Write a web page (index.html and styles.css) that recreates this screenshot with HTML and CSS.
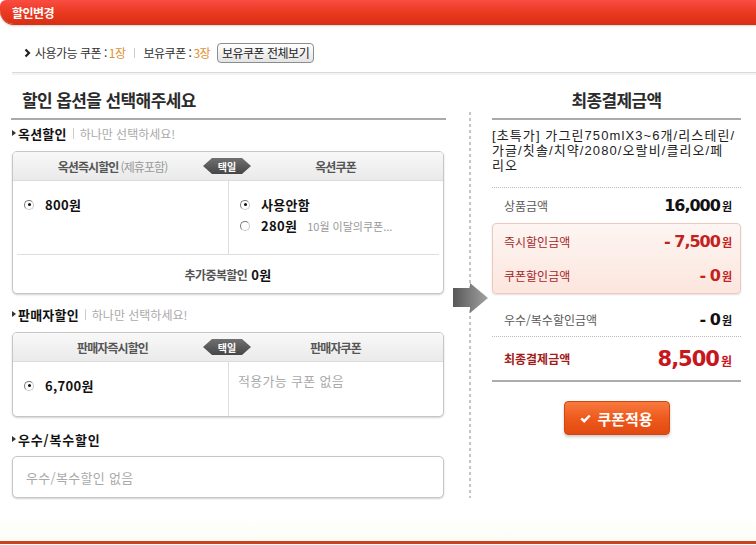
FILE: index.html
```html
<!DOCTYPE html>
<html lang="ko">
<head>
<meta charset="utf-8">
<title>할인변경</title>
<link rel="stylesheet" href="styles.css">
</head>
<body>
<div class="topbar">할인변경</div>

<div class="coupon-row">
  <svg class="chev" width="7" height="10" viewBox="0 0 7 10"><polyline points="1.5,1.5 5,5 1.5,8.5" fill="none" stroke="#222" stroke-width="2.2"/></svg>
  <span class="cr-label">사용가능 쿠폰 :</span><span class="cr-num">1장</span>
  <span class="cr-sep"></span>
  <span class="cr-label">보유쿠폰 :</span><span class="cr-num">3장</span>
  <button class="btn-all" type="button">보유쿠폰 전체보기</button>
</div>

<div class="main">
  <div class="left">
    <h2 class="page-title">할인 옵션을 선택해주세요</h2>

    <div class="sec-label"><span class="tri"></span><b>옥션할인</b><span class="bar"></span><span class="hint">하나만 선택하세요!</span></div>
    <div class="box">
      <div class="box-head">
        <div class="hcol"><b>옥션즉시할인</b><span class="sub">(제휴포함)</span></div>
        <div class="hcol"><b>옥션쿠폰</b></div>
        <span class="badge">택일</span>
      </div>
      <div class="box-body b1">
        <div class="bcol">
          <div class="opt"><span class="radio on"></span><b class="amt">800원</b></div>
        </div>
        <div class="bcol">
          <div class="opt"><span class="radio on"></span><b class="amt">사용안함</b></div>
          <div class="opt"><span class="radio"></span><b class="amt">280원</b><span class="desc">10월 이달의쿠폰...</span></div>
        </div>
      </div>
      <div class="box-foot"><span class="foot-label">추가중복할인</span> <b class="amt">0원</b></div>
    </div>

    <div class="sec-label"><span class="tri"></span><b>판매자할인</b><span class="bar"></span><span class="hint">하나만 선택하세요!</span></div>
    <div class="box">
      <div class="box-head">
        <div class="hcol"><b>판매자즉시할인</b></div>
        <div class="hcol"><b>판매자쿠폰</b></div>
        <span class="badge">택일</span>
      </div>
      <div class="box-body b2">
        <div class="bcol">
          <div class="opt"><span class="radio on"></span><b class="amt">6,700원</b></div>
        </div>
        <div class="bcol">
          <div class="empty">적용가능 쿠폰 없음</div>
        </div>
      </div>
    </div>

    <div class="sec-label third"><span class="tri"></span><b>우수/복수할인</b></div>
    <div class="box simple">우수/복수할인 없음</div>
  </div>

  <div class="divider"></div>

  <div class="right">
    <h2 class="page-title center">최종결제금액</h2>
    <div class="product">
      <div class="pline">[초특가] 가그린750mlX3~6개/리스테린/</div>
      <div class="pline">가글/칫솔/치약/2080/오랄비/클리오/페</div>
      <div class="pline">리오</div>
    </div>
    <div class="price-row"><span class="pl">상품금액</span><span class="pv"><span class="n">16,000</span><span class="won">원</span></span></div>
    <div class="pink">
      <div class="price-row red r1"><span class="pl">즉시할인금액</span><span class="pv"><span class="n">- 7,500</span><span class="won">원</span></span></div>
      <div class="price-row red r2"><span class="pl">쿠폰할인금액</span><span class="pv"><span class="n">- 0</span><span class="won">원</span></span></div>
    </div>
    <div class="price-row dotted"><span class="pl">우수/복수할인금액</span><span class="pv"><span class="n">- 0</span><span class="won">원</span></span></div>
    <div class="price-row final"><span class="pl">최종결제금액</span><span class="pv"><span class="n">8,500</span><span class="won">원</span></span></div>
    <div class="btn-wrap">
      <button class="btn-apply" type="button"><svg width="11" height="9" viewBox="0 0 11 9"><polyline points="1.3,4.3 4.2,7.2 9.8,1.5" fill="none" stroke="#fff" stroke-width="2.4"/></svg>쿠폰적용</button>
    </div>
  </div>

  <svg class="arrow" width="36" height="31" viewBox="0 0 36 31">
    <defs>
      <linearGradient id="ag" x1="0" x2="1" y1="0" y2="0">
        <stop offset="0" stop-color="#585858"/>
        <stop offset="1" stop-color="#a2a2a2"/>
      </linearGradient>
    </defs>
    <polygon points="0,5 17,5 17,0 35,15 17,30 17,24 0,24" fill="url(#ag)"/>
  </svg>
</div>

<div class="bottom-band"></div>
<div class="bottom-line"></div>
</body>
</html>
```
FILE: styles.css
```css
* { box-sizing: border-box; margin: 0; padding: 0; }
html, body { width: 756px; height: 545px; overflow: hidden; background: #fff; }
body {
  font-family: "Noto Sans CJK KR", "Liberation Sans", sans-serif;
  font-size: 12px;
  color: #333;
}
b { font-weight: bold; }

.topbar {
  height: 24px;
  padding-left: 12px;
  display: flex;
  align-items: center;
  color: #fff;
  font-weight: bold;
  font-size: 12px;
  letter-spacing: -0.5px;
  background: linear-gradient(#fa4c42, #e9391f 55%, #d92f15);
  border-radius: 6px 0 0 14px;
  box-shadow: 0 1px 0 #bd3a22, 0 2px 0 #f4d8cf, 0 3px 2px #efefef;
}

.coupon-row {
  margin-left: 12px;
  height: 49px;
  padding: 9px 0 0 12px;
  display: flex;
  align-items: center;
  border-bottom: 1px solid #dadada;
  box-shadow: 0 2px 0 #f3f3f3;
  letter-spacing: -0.5px;
  color: #333;
}
.chev { margin-right: 4px; }
.cr-num { color: #df8f2c; margin-left: 2px; }
.cr-sep { width: 1px; height: 10px; background: #ccc; margin: 0 9px 0 8px; }
.btn-all {
  margin-left: 7px;
  height: 20px;
  width: 97px;
  font: 12px "Noto Sans CJK KR", sans-serif;
  letter-spacing: -0.5px;
  color: #222;
  border: 1px solid #8c8c8c;
  border-radius: 4px;
  background: linear-gradient(#ffffff, #e4e4e4);
}

.main { position: relative; display: flex; align-items: flex-start; }
.left { margin-left: 11px; width: 435px; }
.page-title {
  font-size: 17px;
  font-weight: bold;
  letter-spacing: -0.6px;
  color: #2b2b2b;
  line-height: 24px;
  padding: 15px 0 6px 11px;
  border-bottom: 2px solid #aaa;
}
.page-title.center { text-align: center; padding-left: 0; }

.sec-label {
  display: flex;
  align-items: center;
  height: 16px;
  margin: 12px 0 10px 1px;
  font-size: 13px;
  color: #111;
  letter-spacing: 0.2px;
}
.page-title + .sec-label { margin-top: 5px; }
.sec-label.third { margin-top: 14px; margin-bottom: 9px; letter-spacing: 0.8px; }
.tri {
  width: 0; height: 0;
  border-left: 4px solid #333;
  border-top: 3.5px solid transparent;
  border-bottom: 3.5px solid transparent;
  margin-right: 2px;
}
.bar { width: 1px; height: 11px; background: #ccc; margin: 0 6px; }
.hint { color: #aaa; font-size: 12px; letter-spacing: 0; }

.box {
  margin-left: 1px;
  width: 432px;
  border: 1px solid #c6c6c6;
  border-radius: 5px;
  box-shadow: 0 1px 2px rgba(0,0,0,0.18);
  background: #fff;
  overflow: hidden;
}
.box-head {
  position: relative;
  display: grid;
  grid-template-columns: 1fr 1fr;
  height: 29px;
  border-bottom: 1px solid #dcdcdc;
  background: linear-gradient(#f8f8f8, #eaeaea);
}
.hcol {
  display: flex;
  align-items: center;
  justify-content: center;
  font-size: 12px;
  letter-spacing: -0.9px;
  color: #555;
}
.hcol:first-child { padding-right: 16px; }
.hcol .sub { font-weight: normal; color: #999; margin-left: 2px; }
.badge {
  position: absolute;
  left: 190px;
  top: 6px;
  width: 48px;
  height: 16px;
  display: flex;
  align-items: center;
  justify-content: center;
  font-size: 10px;
  font-weight: bold;
  color: #fff;
  background: linear-gradient(#707070, #464646);
  clip-path: polygon(0 50%, 9px 0, calc(100% - 9px) 0, 100% 50%, calc(100% - 9px) 100%, 9px 100%);
}

.box-body { display: grid; grid-template-columns: 1fr 1fr; }
.box-body.b1 { height: 73px; }
.box-body.b2 { height: 54px; }
.bcol { padding: 13px 0 0 11px; }
.bcol + .bcol { border-left: 1px solid #dedede; }
.opt { display: flex; align-items: center; height: 21px; }
.radio {
  width: 10px; height: 10px;
  border-radius: 50%;
  border: 1px solid #7a7a7a;
  border-right-color: #c8c8c8;
  border-bottom-color: #c8c8c8;
  background: #fff;
  margin-right: 11px;
  position: relative;
}
.radio.on::after {
  content: "";
  position: absolute;
  left: 2.5px; top: 2.5px;
  width: 3px; height: 3px;
  border-radius: 50%;
  background: #111;
}
.amt { font-size: 13px; color: #111; letter-spacing: 0.3px; }
.desc { font-size: 11px; color: #999; margin-left: 10px; }
.empty { font-size: 13px; color: #aaa; margin: -4px 0 0 -2px; letter-spacing: 0.3px; }

.box-foot {
  margin: 0 4px;
  border-top: 1px solid #dedede;
  height: 39px;
  display: flex;
  align-items: center;
  justify-content: center;
  font-size: 12px;
  letter-spacing: -0.6px;
}
.foot-label { color: #555; font-weight: bold; margin-right: 4px; }

.box.simple {
  height: 42px;
  display: flex;
  align-items: center;
  padding-left: 13px;
  font-size: 13px;
  color: #aaa;
  letter-spacing: 0.3px;
}

.divider {
  width: 2px;
  height: 386px;
  margin: 39px 0 0 23px;
  background: repeating-linear-gradient(#c4c4c4 0 3px, transparent 3px 6px);
}

.right { margin-left: 21px; width: 249px; }
.product {
  padding: 8px 0 14px;
  border-bottom: 1px dotted #bbb;
}
.pline {
  height: 15px;
  font-family: "Liberation Sans", "Noto Sans CJK KR", sans-serif;
  font-size: 13px;
  line-height: 15px;
  letter-spacing: 1.1px;
  white-space: nowrap;
  color: #222;
}

.price-row {
  display: flex;
  justify-content: space-between;
  align-items: center;
  height: 35px;
  padding: 0 9px 0 12px;
}
.pl { font-size: 12px; color: #5a5a5a; }
.pv { display: flex; align-items: baseline; color: #111; }
.n {
  font-family: "DejaVu Sans", "Liberation Sans", sans-serif;
  font-weight: bold;
  font-size: 16px;
  letter-spacing: -1px;
}
.won { font-size: 11px; font-weight: bold; margin-left: 2px; }

.pink {
  height: 71px;
  border: 1px solid #ebcabd;
  border-radius: 4px;
  background: linear-gradient(#fdf5f2, #fce6de);
  box-shadow: 0 1px 2px rgba(0,0,0,0.12);
}
.pink .price-row { padding: 0 8px 0 11px; }
.pink .r1 { height: 34px; }
.price-row.red .pl { color: #a5282a; }
.price-row.red .pv { color: #c4201c; }

.price-row.dotted {
  margin-top: 8px;
  height: 35px;
  border-bottom: 1px dotted #bbb;
}
.price-row.final {
  height: 45px;
  border-bottom: 2px solid #acacac;
}
.final .pl { color: #a31c1c; font-weight: bold; font-size: 12px; }
.final .pv { color: #c8161d; }
.final .n { font-size: 21px; letter-spacing: -1px; }
.final .won { font-size: 12px; }

.btn-wrap { display: flex; justify-content: center; padding-top: 19px; }
.btn-apply {
  width: 106px;
  height: 34px;
  display: flex;
  align-items: center;
  justify-content: center;
  gap: 6px;
  font: bold 15px "Noto Sans CJK KR", sans-serif;
  color: #fff;
  border: 1px solid #d2450f;
  border-radius: 4px;
  background: linear-gradient(#f87a3f, #ee5a1d 50%, #e24910);
  box-shadow: 0 2px 3px rgba(0,0,0,0.2);
}

.arrow { position: absolute; left: 453px; top: 210px; }

.bottom-band {
  margin-top: 19px;
  height: 24px;
  background: linear-gradient(#fff, #fafcf4);
}
.bottom-line {
  height: 3px;
  background: #c9431f;
}
```
